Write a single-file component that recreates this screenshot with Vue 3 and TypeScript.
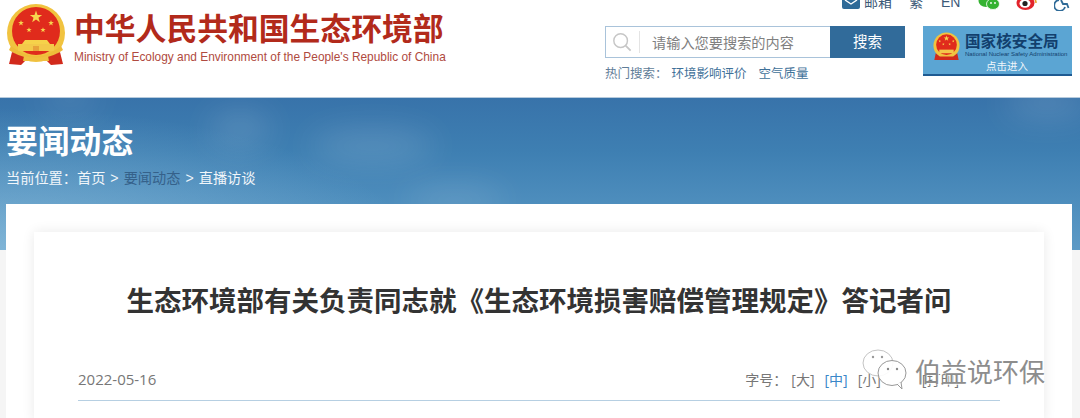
<script setup lang="ts">
const hotWords: string[] = ['环境影响评价', '空气质量']
const stars = [
  { x: 30, y: 13, r: 6.5 },
  { x: 15, y: 19, r: 3 },
  { x: 45, y: 19, r: 3 },
  { x: 23, y: 26, r: 2.8 },
  { x: 37, y: 26, r: 2.8 },
]

function starPoints(cx: number, cy: number, r: number): string {
  const pts: string[] = []
  for (let i = 0; i < 10; i++) {
    const radius = i % 2 === 0 ? r : r * 0.4
    const a = (Math.PI / 5) * i - Math.PI / 2
    pts.push(`${(cx + radius * Math.cos(a)).toFixed(2)},${(cy + radius * Math.sin(a)).toFixed(2)}`)
  }
  return pts.join(' ')
}
</script>

<template>
  <div class="page">
    <header class="top">
      <div class="brand">
        <svg class="emblem" viewBox="0 0 60 62">
          <circle cx="30" cy="29" r="29" fill="#f1c33f" />
          <circle cx="30" cy="27" r="24" fill="#e02b1c" />
          <polygon v-for="(s, i) in stars" :key="i" :points="starPoints(s.x, s.y, s.r)" fill="#f7d54e" />
          <path d="M19 36h22l3 4H16z" fill="#f6d24a" />
          <rect x="12" y="40" width="36" height="7" fill="#f3c94a" />
          <rect x="27" y="42" width="6" height="5" fill="#e8a23a" />
          <path d="M5 42q25 20 50 0l2 4q-27 20-54 0z" fill="#eebc3a" />
          <path d="M6 48l-3 12 12 1 5-5 20 0 5 5 12-1-3-12q-24 13-48 0z" fill="#d22a1c" />
          <path d="M18 52q12 3 24 0l1 5H17z" fill="#f0c040" />
        </svg>
        <div class="brand-text">
          <div class="brand-cn">中华人民共和国生态环境部</div>
          <div class="brand-en">Ministry of Ecology and Environment of the People's Republic of China</div>
        </div>
      </div>

      <div class="tools">
        <div class="links">
          <svg class="ico-mail" viewBox="0 0 18 10">
            <rect width="18" height="12" y="-3" rx="2" fill="#2f6b98" />
            <path d="M3 0l6 4 6-4" fill="none" stroke="#fff" stroke-width="1.4" />
          </svg>
          <span class="link-mail">邮箱</span>
          <span class="link-fan">繁</span>
          <span class="link-en">EN</span>
          <svg class="ico-wx" viewBox="0 0 22 11">
            <ellipse cx="8" cy="1" rx="7.5" ry="6" fill="#35b332" />
            <ellipse cx="15" cy="4" rx="6.5" ry="5.5" fill="#35b332" stroke="#fff" stroke-width="0.8" />
            <circle cx="13" cy="3" r="0.9" fill="#fff" />
            <circle cx="17" cy="3" r="0.9" fill="#fff" />
          </svg>
          <svg class="ico-wb" viewBox="0 0 22 11">
            <ellipse cx="9.500" cy="3" rx="9" ry="7" fill="#e2242c" />
            <ellipse cx="9" cy="3.500" rx="5.500" ry="4.200" fill="#fff" />
            <circle cx="9" cy="3.500" r="2.600" fill="#222" />
            <path d="M15 -2q5 0 5 5" fill="none" stroke="#e8a020" stroke-width="1.500" />
          </svg>
          <svg class="ico-a11y" viewBox="0 0 16 11">
            <path d="M5 0a5.500 5.500 0 1 0 6 7" fill="none" stroke="#2f6b98" stroke-width="1.800" />
            <path d="M7 0l2 4h4l1.500 4" fill="none" stroke="#2f6b98" stroke-width="1.800" />
          </svg>
        </div>

        <div class="tool-row">
          <div class="search-col">
            <div class="search">
              <div class="search-box">
                <svg class="ico-search" viewBox="0 0 22 22">
                  <circle cx="9.500" cy="9.500" r="7.500" fill="none" stroke="#c6c6c6" stroke-width="1.600" />
                  <path d="M15 15l5.500 5.500" stroke="#c6c6c6" stroke-width="2" />
                </svg>
                <span class="search-line"></span>
                <span class="search-hint">请输入您要搜索的内容</span>
              </div>
              <div class="search-btn">搜索</div>
            </div>
            <div class="hot">
              <span>热门搜索：</span>
              <a v-for="w in hotWords" :key="w" class="hot-word">{{ w }}</a>
            </div>
          </div>

          <div class="nnsa">
            <svg class="nnsa-emblem" viewBox="0 0 60 62">
              <circle cx="30" cy="29" r="29" fill="#f1c33f" />
              <circle cx="30" cy="27" r="23" fill="#e02b1c" />
              <polygon v-for="(s, i) in stars" :key="i" :points="starPoints(s.x, s.y, s.r)" fill="#f7d54e" />
              <rect x="14" y="38" width="32" height="8" fill="#f3c94a" />
              <path d="M6 46l-3 15h54l-3-15-9 7H15z" fill="#d22a1c" />
            </svg>
            <div class="nnsa-text">
              <div class="nnsa-cn">国家核安全局</div>
              <div class="nnsa-en">National Nuclear Safety Administration</div>
            </div>
            <div class="nnsa-go">点击进入</div>
          </div>
        </div>
      </div>
    </header>

    <section class="hero">
      <span class="cloud c1"></span>
      <span class="cloud c2"></span>
      <span class="cloud c3"></span>
      <span class="cloud c4"></span>
      <span class="cloud c5"></span>
      <h2 class="hero-title">要闻动态</h2>
      <div class="crumbs">
        <span>当前位置：</span><span>首页</span><span class="sep">&gt;</span>
        <span class="crumb-cur">要闻动态</span><span class="sep">&gt;</span><span>直播访谈</span>
      </div>
    </section>

    <main class="sheet">
      <article class="card">
        <h1 class="title">生态环境部有关负责同志就《生态环境损害赔偿管理规定》答记者问</h1>
        <div class="meta">
          <span class="date">2022-05-16</span>
          <div class="fonts">
            <span class="font-label">字号：</span>
            <span>[大]</span>
            <span class="font-on">[中]</span>
            <span>[小]</span>
            <span class="print">[打印]</span>
          </div>
        </div>
      </article>
    </main>

    <div class="watermark">
      <svg class="wm-icon" viewBox="0 0 46 42">
        <ellipse cx="16" cy="14" rx="15" ry="13" fill="rgba(255,255,255,.85)" stroke="#c4c4c4" stroke-width="1" />
        <ellipse cx="30" cy="24" rx="14" ry="12.500" fill="rgba(255,255,255,.9)" stroke="#999" stroke-width="1" />
        <path d="M35 35l5 5-1-7" fill="#fff" stroke="#999" />
        <circle cx="11" cy="8" r="1.200" fill="#999" />
        <circle cx="20" cy="8" r="1.200" fill="#999" />
        <circle cx="26" cy="20" r="1.200" fill="#888" />
        <circle cx="35" cy="20" r="1.200" fill="#888" />
      </svg>
      <span class="wm-text">伯益说环保</span>
    </div>
  </div>
</template>

<style scoped>
.page {
  position: relative;
  width: 1080px;
  height: 418px;
  overflow: hidden;
  background: #f5f5f5;
  font-family: "Liberation Sans", "Noto Sans CJK SC", sans-serif;
}

.top {
  height: 97px;
  display: flex;
  justify-content: space-between;
  background: #fff;
  border-bottom: 1px solid #b7cbdd;
  box-sizing: content-box;
}

.brand {
  display: flex;
  align-items: flex-start;
  padding: 4px 0 0 6px;
}

.emblem {
  width: 60px;
  height: 62px;
}

.brand-text {
  margin: 8px 0 0 8px;
}

.brand-cn {
  font-size: 30.800px;
  line-height: 36px;
  font-weight: 700;
  color: #b22a1b;
  white-space: nowrap;
}

.brand-en {
  font-size: 11.900px;
  line-height: 16px;
  margin-top: 1px;
  color: #b04a40;
  white-space: nowrap;
}

.tools {
  width: 475px;
  flex: none;
  display: flex;
  flex-direction: column;
}

.links {
  height: 26px;
  display: flex;
  align-items: flex-start;
  margin-top: -6px;
  padding-left: 237px;
  font-size: 14px;
  line-height: 17px;
  color: #3d5a78;
  white-space: nowrap;
}

.link-mail {
  margin-left: 4px;
}

.link-fan {
  margin-left: 17px;
}

.link-en {
  margin-left: 18px;
}

.ico-mail {
  width: 18px;
  height: 10px;
  margin-top: 6px;
}

.ico-wx,
.ico-wb,
.ico-a11y {
  height: 11px;
  margin-top: 6px;
}

.ico-wx {
  width: 22px;
  margin-left: 18px;
}

.ico-wb {
  width: 22px;
  margin-left: 16px;
}

.ico-a11y {
  width: 16px;
  margin-left: 16px;
}

.tool-row {
  display: flex;
  gap: 18px;
  margin-top: 6px;
}

.search {
  display: flex;
  height: 32px;
}

.search-box {
  width: 225px;
  display: flex;
  align-items: center;
  box-sizing: border-box;
  border: 1px solid #a9c3da;
  border-right: none;
  background: #fff;
}

.ico-search {
  width: 20px;
  height: 20px;
  margin-left: 6px;
}

.search-line {
  width: 1px;
  height: 22px;
  margin: 0 12px 0 7px;
  background: #e4e4e4;
}

.search-hint {
  font-size: 14.200px;
  color: #808080;
}

.search-btn {
  width: 75px;
  background: #316b9a;
  color: #fff;
  font-size: 14.500px;
  line-height: 32px;
  text-align: center;
}

.hot {
  display: flex;
  gap: 4px;
  margin-top: 8px;
  font-size: 12.500px;
  line-height: 17px;
  color: #5f7d98;
}

.hot-word {
  margin-right: 8px;
  color: #3f7199;
}

.nnsa {
  position: relative;
  width: 149px;
  height: 50px;
  box-sizing: border-box;
  border-bottom: 2px solid #1f5b92;
  background: #5ba5d3;
  display: flex;
  padding: 6px 0 0 10px;
}

.nnsa-emblem {
  width: 27px;
  height: 29px;
}

.nnsa-text {
  margin-left: 5px;
  padding-top: 1px;
}

.nnsa-cn {
  font-size: 15.600px;
  line-height: 18px;
  font-weight: 700;
  color: #123f6d;
  white-space: nowrap;
}

.nnsa-en {
  font-size: 6px;
  line-height: 8px;
  margin-top: -1px;
  color: #123f6d;
  white-space: nowrap;
}

.nnsa-go {
  position: absolute;
  left: 0;
  right: 0;
  bottom: 1px;
  padding-left: 19px;
  text-align: center;
  font-size: 10.500px;
  line-height: 13px;
  color: #f0f6fb;
}

.hero {
  position: relative;
  height: 152px;
  box-sizing: border-box;
  padding: 24px 0 0 6px;
  overflow: hidden;
  background:
    radial-gradient(ellipse 420px 150px at 0 160px, rgba(160, 205, 230, 0.55), rgba(160, 205, 230, 0)),
    linear-gradient(180deg, #3873aa 0%, #3e7fb2 35%, #4f8fbe 72%, #5c9ac6 100%);
}

.hero-title {
  position: relative;
  margin: 0;
  font-size: 31.800px;
  line-height: 40px;
  font-weight: 700;
  color: #fff;
}

.crumbs {
  position: relative;
  display: flex;
  margin-top: 6px;
  font-size: 14.200px;
  line-height: 20px;
  color: #f1f6fa;
}

.sep {
  margin: 0 5px;
}

.crumb-cur {
  color: #35618a;
}

.cloud {
  position: absolute;
  border-radius: 50%;
  background: rgba(255, 255, 255, 0.14);
  filter: blur(16px);
}

.c1 {
  left: 210px;
  top: 14px;
  width: 60px;
  height: 34px;
}

.c2 {
  left: 310px;
  top: 32px;
  width: 125px;
  height: 32px;
}

.c3 {
  left: 40px;
  top: -8px;
  width: 60px;
  height: 18px;
}

.c4 {
  left: 1005px;
  top: -10px;
  width: 85px;
  height: 30px;
}

.c5 {
  left: 405px;
  top: 90px;
  width: 100px;
  height: 24px;
}

.sheet {
  position: relative;
  margin: -46px 8px 0 6px;
  padding: 28px 28px 0;
  height: 214px;
  box-sizing: border-box;
  background: #fff;
}

.card {
  height: 190px;
  padding: 0 44px;
  box-sizing: border-box;
  background: #fff;
  box-shadow: 0 0 12px rgba(0, 0, 0, 0.09);
}

.title {
  margin: 0;
  padding-top: 52px;
  font-size: 27.500px;
  line-height: 36px;
  font-weight: 700;
  color: #333;
  text-align: center;
  white-space: nowrap;
}

.meta {
  display: flex;
  justify-content: space-between;
  align-items: center;
  height: 38px;
  margin-top: 40px;
  padding-bottom: 2px;
  border-bottom: 1px solid #b6cfe2;
  box-sizing: content-box;
  font-family: "Open Sans", "Noto Sans CJK SC", sans-serif;
  font-size: 15px;
  color: #777;
}

.fonts {
  display: flex;
  gap: 10px;
  font-size: 14px;
  padding-right: 41px;
  color: #777;
}

.font-label {
  margin-right: -6px;
}

.font-on {
  color: #3a87c8;
}

.print {
  margin-left: 31px;
}

.watermark {
  position: absolute;
  left: 862px;
  top: 349px;
  display: flex;
  align-items: center;
  gap: 7px;
}

.wm-icon {
  width: 46px;
  height: 42px;
}

.wm-text {
  font-size: 26px;
  color: #8d8d8d;
  text-shadow: 1px 1px 0 rgba(255, 255, 255, 0.8);
  white-space: nowrap;
}
</style>
